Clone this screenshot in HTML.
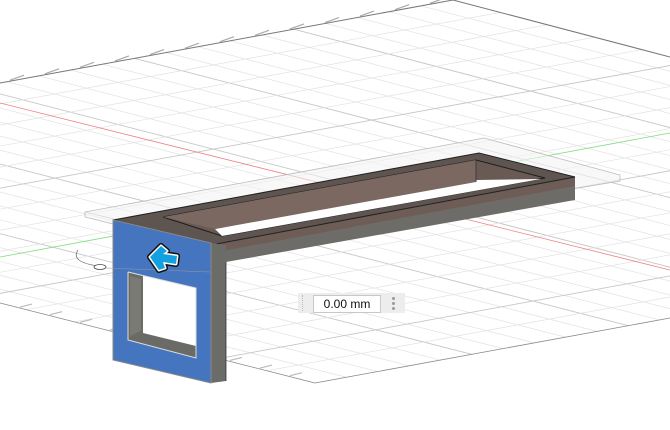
<!DOCTYPE html>
<html><head><meta charset="utf-8"><style>
html,body{margin:0;padding:0;background:#fff;width:670px;height:430px;overflow:hidden;font-family:"Liberation Sans",sans-serif}
svg{position:absolute;left:0;top:0}
#dim{position:absolute;left:298px;top:293px;width:107px;height:20px;background:#ededed}
#inp{position:absolute;left:313px;top:295px;width:66px;height:16px;background:#fff;border:1px solid #c8c8c8;font-size:12px;line-height:16px;text-align:center;color:#111}
.dot{position:absolute;left:392px;width:3px;height:3px;border-radius:2px;background:#999}
</style></head><body>
<svg id="s" width="670" height="430" viewBox="0 0 670 430">
<defs><clipPath id="gc"><polygon points="-503,175 453,0 1255,211 315,383"/></clipPath></defs>
<g id="grid" clip-path="url(#gc)"></g>
<g id="ticks"></g>
<polyline points="0,83 453,0 670,57" fill="none" stroke="#777" stroke-width="1"/>
<polyline points="0,303 315,383 670,318" fill="none" stroke="#888" stroke-width="0.8"/>
<line x1="0" y1="103" x2="670" y2="270" stroke="#f08080" stroke-width="0.8"/>
<line x1="0" y1="257" x2="670" y2="133" stroke="#7fdc7f" stroke-width="0.8"/>
<polygon points="85,212 484,138 620,175 620,181 212,249 85,217" fill="#f4f4f4" fill-opacity="0.6" stroke="#bbb" stroke-width="0.8"/>
<line x1="85" y1="212" x2="212" y2="243" stroke="#ccc" stroke-width="0.6"/>
<polygon points="211,245 575,177 575,200 226,262 211,262" fill="#6d6c68"/>
<polygon points="211,245 575,177 575,186 211,253" fill="#6e5d56"/>
<polygon points="113,220 479,153 575,177 211,245" fill="#5e5450" stroke="#222" stroke-width="1"/>
<polygon points="163,217 476,160 545,178 222,236" fill="#6a5a54" stroke="#1e1e1e" stroke-width="1"/>
<polygon points="215,229 477,180 541,179 222,236" fill="#fff"/>
<polygon points="163,217 476,160 476,182 215,229" fill="#7b6860"/>
<line x1="476" y1="160" x2="476" y2="182" stroke="#333" stroke-width="0.8"/>
<polygon points="211,243 226,245 226,381 211,383" fill="#6b6b67"/>
<line x1="226" y1="262" x2="226" y2="381" stroke="#333" stroke-width="0.8"/>
<polygon points="113,220 211,243 211,383 113,360" fill="#4675c0" stroke="#888" stroke-width="1"/>
<polygon points="128,272 196,288 196,358 128,340" fill="#fff"/>
<polygon points="128,272 143,276 143,333 196,346 196,358 128,340" fill="#6a6a66"/>
<polygon points="130,276 141,279 141,331 130,336" fill="#7a7a75"/>
<polyline points="128,272 196,288 196,358 128,340 128,272" fill="none" stroke="#ddd" stroke-width="1"/>
<path d="M78,250 Q70,262 98,266" fill="none" stroke="#777" stroke-width="0.8"/>
<ellipse cx="100" cy="267" rx="6" ry="2.5" fill="#fff" stroke="#444" stroke-width="0.8"/>
<line x1="106" y1="268" x2="210" y2="272" stroke="#999" stroke-width="0.5"/>
<path d="M150,257 L161,246 L167,251 L163,254 L177,256 L176,264 L163,262 L165,268 L159,270 Z" fill="none" stroke="#111" stroke-width="6" stroke-linejoin="round"/>
<path d="M150,257 L161,246 L167,251 L163,254 L177,256 L176,264 L163,262 L165,268 L159,270 Z" fill="#12a0e0" stroke="#fff" stroke-width="3" stroke-linejoin="round" paint-order="stroke"/>
</svg>
<div id="dim"></div>
<div style="position:absolute;left:302px;top:295px;width:3px;height:16px;border-left:1px dotted #bbb"></div>
<div id="inp">0.00 mm</div>
<div class="dot" style="top:297px"></div><div class="dot" style="top:302px"></div><div class="dot" style="top:307px"></div>
<script>
var g=document.getElementById('grid'),tk=document.getElementById('ticks'),ns='http://www.w3.org/2000/svg';
var L=[-503,175],B=[453,0],R=[1255,211],F=[315,383];
function lp(a,b,t){return [a[0]+(b[0]-a[0])*t,a[1]+(b[1]-a[1])*t];}
function ln(p,q,c,w,par){var e=document.createElementNS(ns,'line');e.setAttribute('x1',p[0]);e.setAttribute('y1',p[1]);e.setAttribute('x2',q[0]);e.setAttribute('y2',q[1]);e.setAttribute('stroke',c);e.setAttribute('stroke-width',w);(par||g).appendChild(e);}
var N1=30,N2=17;
for(var i=1;i<N1;i++){var t=i/N1;ln(lp(F,R,t),lp(L,B,t),i%5==0?'#c6c6c6':'#e2e2e2',i%5==0?0.9:0.7);}
for(var j=1;j<N2;j++){var t=j/N2;ln(lp(L,F,t),lp(B,R,t),j%5==0?'#c6c6c6':'#e2e2e2',j%5==0?0.9:0.7);}
for(var x=10;x<440;x+=35){var y=83-0.183*x;ln([x,y-1],[x+14,y-6],'#aaa',1.2,tk);}
for(var x=20;x<300;x+=30){var y=303+0.254*x;ln([x,y-1],[x+12,y-4],'#bbb',1.2,tk);}
</script>
</body></html>
